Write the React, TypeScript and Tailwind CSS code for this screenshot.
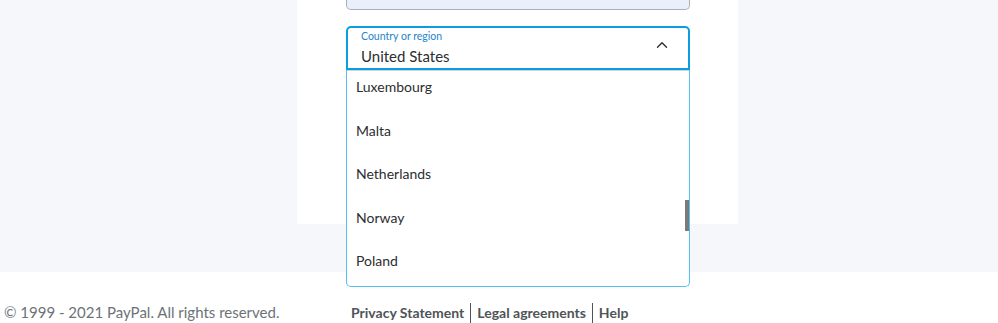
import React from 'react'
import { ChevronUp } from 'lucide-react'

const countries = ['Luxembourg', 'Malta', 'Netherlands', 'Norway', 'Poland']

const font = { fontFamily: 'Lato, "Open Sans", sans-serif' }

const App = () => {
  return (
    <div className="w-[998px] h-[323px] overflow-hidden bg-white text-[#2c2e2f]" style={font}>
      <div className="h-[272px] bg-[#f5f7fa] flex justify-center">
        <div className="w-[441px] h-[224px] bg-white ml-[37px] pl-[49px] pr-[48px] flex flex-col">
          {/* bottom of the button above */}
          <div className="h-[11px] -mt-px bg-[#e9f0fb] border border-t-0 border-[#a9b0b5] rounded-b-[5px]" />

          <div className="relative mt-[16px]">
            <div className="h-[44px] border-2 border-[#0a9ee0] rounded-t-[5px] pl-[13px] pr-[17px] flex items-center">
              <div className="flex-1 flex flex-col pt-[1px]">
                <span className="text-[10.5px] leading-[13px] text-[#2584cc]">Country or region</span>
                <span className="text-[15px] leading-[22px] mt-[2px]">United States</span>
              </div>
              <ChevronUp className="w-[18px] h-[18px] -mt-[6px]" strokeWidth={1.8} />
            </div>

            <div className="absolute left-0 right-0 top-[44px] h-[217px] bg-white border border-t-0 border-[#55bff0] rounded-b-[5px] overflow-hidden">
              <div className="border-t border-[#cfd3d6]" />
              <ul className="pl-[9px]">
                {countries.map((c, i) => (
                  <li key={c} className={`text-[14px] leading-[20px] ${i === 0 ? 'pt-[6px]' : 'pt-[23.5px]'}`}>
                    {c}
                  </li>
                ))}
              </ul>
              <div className="absolute right-0 top-[130px] w-[4px] h-[31px] bg-[#7a7a7a]" />
            </div>
          </div>
        </div>
      </div>

      <footer className="h-[51px] flex items-center pt-[30px] text-[15px]">
        <span className="pl-[4px] w-[351px] text-[#6c7378]">© 1999 - 2021 PayPal. All rights reserved.</span>
        <nav className="flex items-center font-bold text-[14px] text-[#4f5457]">
          <a className="pr-[6px] border-r border-[#4f5457] leading-[20px]">Privacy Statement</a>
          <a className="px-[6px] border-r border-[#4f5457] leading-[20px]">Legal agreements</a>
          <a className="pl-[6px] leading-[20px]">Help</a>
        </nav>
      </footer>
    </div>
  )
}

export default App
